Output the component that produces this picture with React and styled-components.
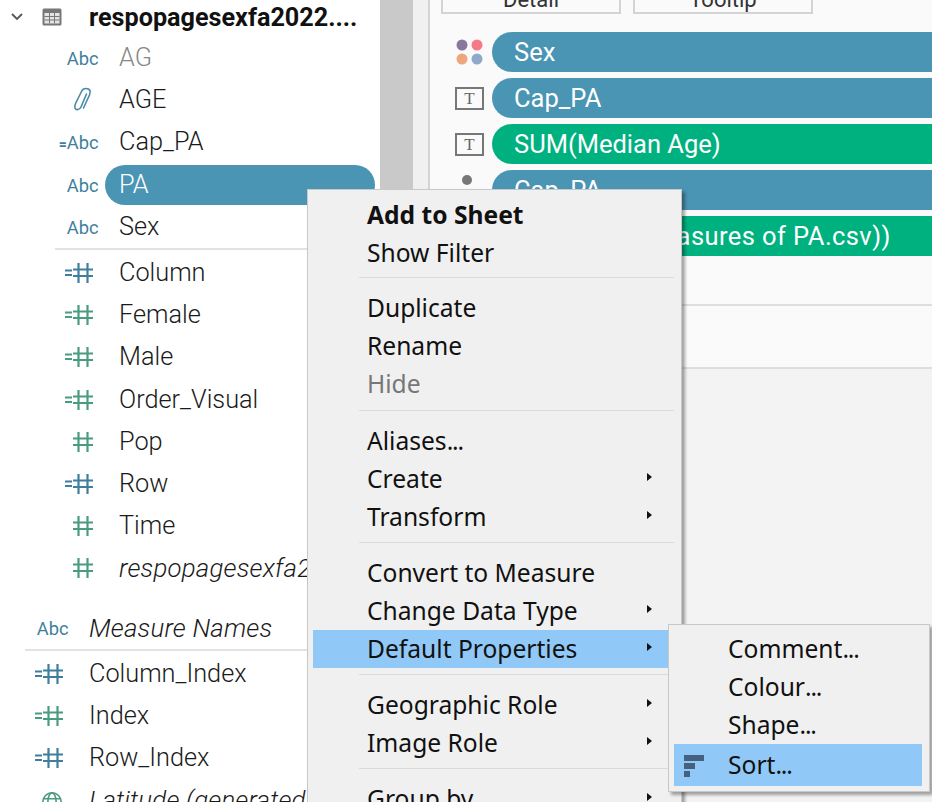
import React from 'react';
import styled, { createGlobalStyle } from 'styled-components';

const GlobalStyle = createGlobalStyle`
    html, body {
        margin: 0;
        padding: 0;
        background: #fff;
    }
    body {
        width: 932px;
        height: 802px;
        overflow: hidden;
        font-family: 'Noto Sans', 'Liberation Sans', sans-serif;
    }
`;

const BLUE = '#4a94b4';
const GREEN = '#00b180';
const ICON_BLUE = '#3f7f9d';
const ICON_GREEN = '#4a9c80';

function HashIcon({ color, calc }) {
    return (
        <svg width="36" height="22" viewBox="0 0 36 22" fill="none" stroke={color} strokeWidth="2.2">
            {calc && <path d="M1 8.500h7M1 13h7" />}
            <path d="M9 7.500h20M9 14h20M14.500 1v20M23.500 1v20" />
        </svg>
    );
}

function ClipIcon() {
    return (
        <svg width="20" height="26" viewBox="0 0 20 26" fill="none" stroke="#4a8aa8" strokeWidth="1.6" strokeLinecap="round">
            <path d="M13.500 7 L8 20 C6.800 23 2 24 1.800 20 C1.800 18.500 2.300 17 3 15.500 L9 3.500 C10.500 0.800 15.500 0.800 17 3.500 C17.500 5 17 6.500 16.500 8 L10.500 21" />
        </svg>
    );
}

function GlobeIcon() {
    return (
        <svg width="22" height="22" viewBox="0 0 24 24" fill="none" stroke={ICON_GREEN} strokeWidth="1.8">
            <circle cx="12" cy="12" r="10" />
            <ellipse cx="12" cy="12" rx="4.500" ry="10" />
            <path d="M2 8.500h20M2 15.500h20" />
        </svg>
    );
}

function TableIcon() {
    return (
        <svg width="20" height="18" viewBox="0 0 20 18">
            <rect x="0.500" y="0.500" width="19" height="17" rx="1.500" fill="#777" />
            <path d="M2.500 5h15v10.500h-15z" fill="#e4e4e4" />
            <path d="M2.500 8.500h15M2.500 12h15M7.500 5v10.500M12.500 5v10.500" stroke="#777" strokeWidth="1" />
        </svg>
    );
}

function ChevronIcon() {
    return (
        <svg width="14" height="10" viewBox="0 0 14 10" fill="none" stroke="#555" strokeWidth="1.800">
            <path d="M2 2l5 5 5-5" />
        </svg>
    );
}

function SortIcon() {
    return (
        <svg width="20" height="22" viewBox="0 0 20 22" fill="#46607f">
            <rect x="0" y="0" width="20" height="6" />
            <rect x="0" y="8" width="11" height="6" />
            <rect x="0" y="16" width="6" height="6" />
        </svg>
    );
}

function ColorDots() {
    return (
        <svg width="29" height="26" viewBox="0 0 29 26">
            <circle cx="7" cy="6" r="5.500" fill="#8a779c" />
            <circle cx="22" cy="6" r="5.500" fill="#f47a8a" />
            <circle cx="7" cy="20" r="5.500" fill="#eea67c" />
            <circle cx="22" cy="20" r="5.500" fill="#8daacb" />
        </svg>
    );
}

const dimensions = [
    { icon: 'abc', label: 'AG', muted: true },
    { icon: 'clip', label: 'AGE' },
    { icon: 'calc', label: 'Cap_PA' },
    { icon: 'abc', label: 'PA', selected: true },
    { icon: 'abc', label: 'Sex', last: true },
];

const measures = [
    { icon: 'hash', color: ICON_BLUE, calc: true, label: 'Column' },
    { icon: 'hash', color: ICON_GREEN, calc: true, label: 'Female' },
    { icon: 'hash', color: ICON_GREEN, calc: true, label: 'Male' },
    { icon: 'hash', color: ICON_GREEN, calc: true, label: 'Order_Visual' },
    { icon: 'hash', color: ICON_GREEN, label: 'Pop' },
    { icon: 'hash', color: ICON_BLUE, calc: true, label: 'Row' },
    { icon: 'hash', color: ICON_GREEN, label: 'Time' },
    { icon: 'hash', color: ICON_GREEN, label: 'respopagesexfa2022', italic: true },
];

const outerFields = [
    { icon: 'hash', color: ICON_BLUE, calc: true, label: 'Column_Index' },
    { icon: 'hash', color: ICON_GREEN, calc: true, label: 'Index' },
    { icon: 'hash', color: ICON_BLUE, calc: true, label: 'Row_Index' },
    { icon: 'globe', label: 'Latitude (generated)', italic: true },
];

function FieldIcon({ field }) {
    if (field.icon === 'abc') return <AbcText>Abc</AbcText>;
    if (field.icon === 'calc') return <AbcText><CalcMark>=</CalcMark>Abc</AbcText>;
    if (field.icon === 'clip') return <ClipSlot><ClipIcon /></ClipSlot>;
    if (field.icon === 'globe') return <GlobeSlot><GlobeIcon /></GlobeSlot>;
    return <HashIcon color={field.color} calc={field.calc} />;
}

function FieldRow({ field, outer }) {
    return (
        <Row $outer={outer}>
            <IconSlot><FieldIcon field={field} /></IconSlot>
            <FieldName $selected={field.selected} $muted={field.muted} $italic={field.italic}>
                {field.label}
            </FieldName>
        </Row>
    );
}

const pills = [
    { icon: 'dots', label: 'Sex', color: BLUE },
    { icon: 'text', label: 'Cap_PA', color: BLUE },
    { icon: 'text', label: 'SUM(Median Age)', color: GREEN },
    { icon: 'dot', label: 'Cap_PA', color: BLUE },
    { icon: 'none', label: 'SUM(Age (Measures of PA.csv))', color: GREEN, spaced: true },
];

function MarkIcon({ type }) {
    if (type === 'dots') return <ColorDots />;
    if (type === 'text') return <TextBox>T</TextBox>;
    if (type === 'dot') return <Dot />;
    return null;
}

// gap = space above each separator, the real menu is not quite even
const mainMenu = [
    {
        items: [
            { label: 'Add to Sheet', bold: true },
            { label: 'Show Filter' },
        ],
    },
    {
        gap: 5,
        items: [
            { label: 'Duplicate' },
            { label: 'Rename' },
            { label: 'Hide', disabled: true },
        ],
    },
    {
        gap: 7,
        items: [
            { label: 'Aliases', dots: true },
            { label: 'Create', arrow: true },
            { label: 'Transform', arrow: true },
        ],
    },
    {
        gap: 6,
        items: [
            { label: 'Convert to Measure' },
            { label: 'Change Data Type', arrow: true },
            { label: 'Default Properties', arrow: true, active: true },
        ],
    },
    {
        gap: 6,
        items: [
            { label: 'Geographic Role', arrow: true },
            { label: 'Image Role', arrow: true },
        ],
    },
    {
        gap: 6,
        items: [
            { label: 'Group by', arrow: true },
        ],
    },
];

export default function App() {
    return (
        <Page>
            <GlobalStyle />
            <DataPane>
                <SourceRow>
                    <ChevronIcon />
                    <TableIcon />
                    <SourceName>respopagesexfa2022....</SourceName>
                </SourceRow>
                <Group>
                    {dimensions.map(f => <FieldRow key={f.label} field={f} />)}
                </Group>
                <GroupRule />
                <Group>
                    {measures.map(f => <FieldRow key={f.label} field={f} />)}
                </Group>
                <OuterHead>
                    <Row $outer>
                        <IconSlot><AbcText>Abc</AbcText></IconSlot>
                        <FieldName $italic>Measure Names</FieldName>
                    </Row>
                </OuterHead>
                <OuterRule />
                <Group>
                    {outerFields.map(f => <FieldRow key={f.label} field={f} outer />)}
                </Group>
            </DataPane>
            <Scrollbar />
            <Gutter />
            <MarksPane>
                <MarksTop>
                    <ShelfButtons>
                        <ShelfButton>Detail</ShelfButton>
                        <ShelfButton>Tooltip</ShelfButton>
                    </ShelfButtons>
                    <PillList>
                        {pills.map((p, i) => (
                            <PillRow key={i}>
                                <PillIcon><MarkIcon type={p.icon} /></PillIcon>
                                <Pill $color={p.color} $spaced={p.spaced}>{p.label}</Pill>
                            </PillRow>
                        ))}
                    </PillList>
                </MarksTop>
                <PaneBand />
                <PaneRest />
            </MarksPane>

            <Menu>
                {mainMenu.map((group, i) => (
                    <div key={i}>
                        {group.gap && <MenuSeparator $gap={group.gap} />}
                        {group.items.map(item => (
                            <MenuItem key={item.label} $bold={item.bold} $disabled={item.disabled} $active={item.active}>
                                {item.label}
                                {item.dots && <Dots>...</Dots>}
                                {item.arrow && <Arrow />}
                            </MenuItem>
                        ))}
                    </div>
                ))}
            </Menu>

            <SubMenu>
                <SubItem>Comment<Dots>...</Dots></SubItem>
                <SubItem>Colour<Dots>...</Dots></SubItem>
                <SubItem>Shape<Dots>...</Dots></SubItem>
                <SubItem $active>
                    <SortSlot><SortIcon /></SortSlot>
                    Sort<Dots>...</Dots>
                </SubItem>
            </SubMenu>
        </Page>
    );
}

const Page = styled.div`
    position: relative;
    width: 932px;
    height: 802px;
    overflow: hidden;
    display: flex;
    background: #fff;
`;

const DataPane = styled.div`
    width: 380px;
    flex: none;
    background: #fff;
`;

const SourceRow = styled.div`
    height: 37px;
    box-sizing: border-box;
    padding: 0 0 3px 10px;
    display: flex;
    align-items: center;
    gap: 18px;
`;

const SourceName = styled.span`
    margin-left: 9px;
    font-family: Roboto, sans-serif;
    font-size: 25.200px;
    font-weight: 700;
    color: #111;
    white-space: nowrap;
`;

const Group = styled.div`
    display: flex;
    flex-direction: column;
`;

const Row = styled.div`
    height: 42.200px;
    display: flex;
    align-items: center;
    padding-left: ${p => (p.$outer ? '30px' : '60px')};
`;

const IconSlot = styled.div`
    width: 40px;
    height: 30px;
    flex: none;
    display: flex;
    align-items: center;
    justify-content: flex-end;
`;

const AbcText = styled.span`
    padding: 1px 1.500px 0 0;
    font-family: Roboto, sans-serif;
    font-size: 18.300px;
    color: ${ICON_BLUE};
    white-space: nowrap;
`;

const CalcMark = styled.span`
    font-weight: 700;
    font-size: 14px;
`;

const ClipSlot = styled.span`
    margin-right: 7px;
    line-height: 0;
`;

const GlobeSlot = styled.span`
    margin: 4px 7px 0 0;
    line-height: 0;
`;

const FieldName = styled.div`
    margin-left: ${p => (p.$selected ? '5px' : '19px')};
    padding: ${p => (p.$selected ? '0 14px' : '0')};
    flex: ${p => (p.$selected ? '0 0 270px' : '0 1 auto')};
    height: 40px;
    box-sizing: border-box;
    line-height: 40px;
    font-family: Roboto, sans-serif;
    font-size: ${p => (p.$italic ? '25.800px' : '25.300px')};
    letter-spacing: ${p => (p.$italic ? '0.200px' : '0')};
    font-weight: 300;
    font-style: ${p => (p.$italic ? 'italic' : 'normal')};
    color: ${p => (p.$selected ? '#fff' : p.$muted ? '#888' : '#1a1a1a')};
    background: ${p => (p.$selected ? BLUE : 'transparent')};
    border-radius: ${p => (p.$selected ? '20px' : '0')};
    white-space: nowrap;
`;

const GroupRule = styled.div`
    height: 2px;
    margin: 0 0 2px 55px;
    background: #e2e2e2;
`;

const OuterHead = styled.div`
    margin-top: 17px;
`;

const OuterRule = styled.div`
    height: 2px;
    margin: 0 0 2px 25px;
    background: #e2e2e2;
`;

const Scrollbar = styled.div`
    width: 33px;
    flex: none;
    background: #c9c9c9;
`;

const Gutter = styled.div`
    width: 15px;
    flex: none;
    background: #f0f0f0;
    border-right: 2px solid #d4d4d4;
`;

const MarksPane = styled.div`
    flex: 1;
    min-width: 0;
    display: flex;
    flex-direction: column;
`;

const MarksTop = styled.div`
    height: 306px;
    flex: none;
    box-sizing: border-box;
    background: #fafafa;
    border-bottom: 2px solid #dedede;
`;

const ShelfButtons = styled.div`
    display: flex;
    gap: 12px;
    height: 14px;
    padding-left: 11px;
    overflow: hidden;
`;

const ShelfButton = styled.div`
    width: 180px;
    height: 14px;
    box-sizing: border-box;
    border: 2px solid #d4d4d4;
    border-top: none;
    font-family: Roboto, sans-serif;
    font-size: 22px;
    line-height: 0;
    text-align: center;
    color: #333;
`;

const PillList = styled.div`
    display: flex;
    flex-direction: column;
    gap: 6px;
    margin-top: 18px;
`;

const PillRow = styled.div`
    display: flex;
    align-items: center;
    height: 40px;
`;

const PillIcon = styled.div`
    width: 62px;
    flex: none;
    display: flex;
    justify-content: flex-end;
    padding-right: 8px;
    box-sizing: border-box;
`;

const Pill = styled.div`
    flex: 1;
    height: 40px;
    line-height: 40px;
    padding-left: 22px;
    border-radius: 20px 0 0 20px;
    background: ${p => p.$color};
    color: #fff;
    font-family: Roboto, sans-serif;
    font-size: 25.500px;
    font-weight: 400;
    letter-spacing: ${p => (p.$spaced ? '0.420px' : '0')};
    white-space: nowrap;
`;

const TextBox = styled.div`
    width: 29px;
    height: 23px;
    box-sizing: border-box;
    border: 2px solid #777;
    font-family: 'Liberation Serif', serif;
    font-size: 17px;
    line-height: 19px;
    text-align: center;
    color: #666;
`;

const Dot = styled.div`
    width: 10px;
    height: 10px;
    margin: 0 12px 20px 0;
    border-radius: 50%;
    background: #777;
`;

const PaneBand = styled.div`
    height: 61px;
    flex: none;
    background: #fafafa;
    border-bottom: 2px solid #dedede;
`;

const PaneRest = styled.div`
    flex: 1;
    background: #f3f3f3;
`;

const Menu = styled.div`
    position: absolute;
    left: 307px;
    top: 189px;
    width: 375px;
    box-sizing: border-box;
    padding: 6px 0 0 5px;
    background: #f0f0f0;
    border: 1px solid #c8c8c8;
    box-shadow: 3px 3px 3px rgba(0, 0, 0, 0.35);
`;

const MenuSeparator = styled.div`
    height: 1px;
    margin: ${p => p.$gap}px 7px 11px 46px;
    background: #dadada;
`;

const MenuItem = styled.div`
    position: relative;
    height: 38px;
    line-height: 38px;
    padding-left: 54px;
    font-family: 'Noto Sans', sans-serif;
    font-size: 24.600px;
    font-weight: ${p => (p.$bold ? 700 : 400)};
    color: ${p => (p.$disabled ? '#777' : '#111')};
    background: ${p => (p.$active ? '#90c8f7' : 'transparent')};
    white-space: nowrap;
`;

const Dots = styled.span`
    letter-spacing: -1.200px;
`;

const Arrow = styled.span`
    position: absolute;
    right: 29px;
    top: 13px;
    border-left: 5px solid #111;
    border-top: 4.500px solid transparent;
    border-bottom: 4.500px solid transparent;
`;

const SubMenu = styled.div`
    position: absolute;
    left: 668px;
    top: 624px;
    width: 262px;
    box-sizing: border-box;
    padding: 5px 7px 5px 5px;
    background: #f0f0f0;
    border: 1px solid #c8c8c8;
    box-shadow: 3px 3px 3px rgba(0, 0, 0, 0.35);
`;

const SubItem = styled.div`
    position: relative;
    height: ${p => (p.$active ? '42px' : '38px')};
    line-height: ${p => (p.$active ? '42px' : '38px')};
    padding-left: 54px;
    font-family: 'Noto Sans', sans-serif;
    font-size: 24.600px;
    color: #111;
    background: ${p => (p.$active ? '#90c8f7' : 'transparent')};
`;

const SortSlot = styled.span`
    position: absolute;
    left: 10px;
    top: 11px;
    line-height: 0;
`;
